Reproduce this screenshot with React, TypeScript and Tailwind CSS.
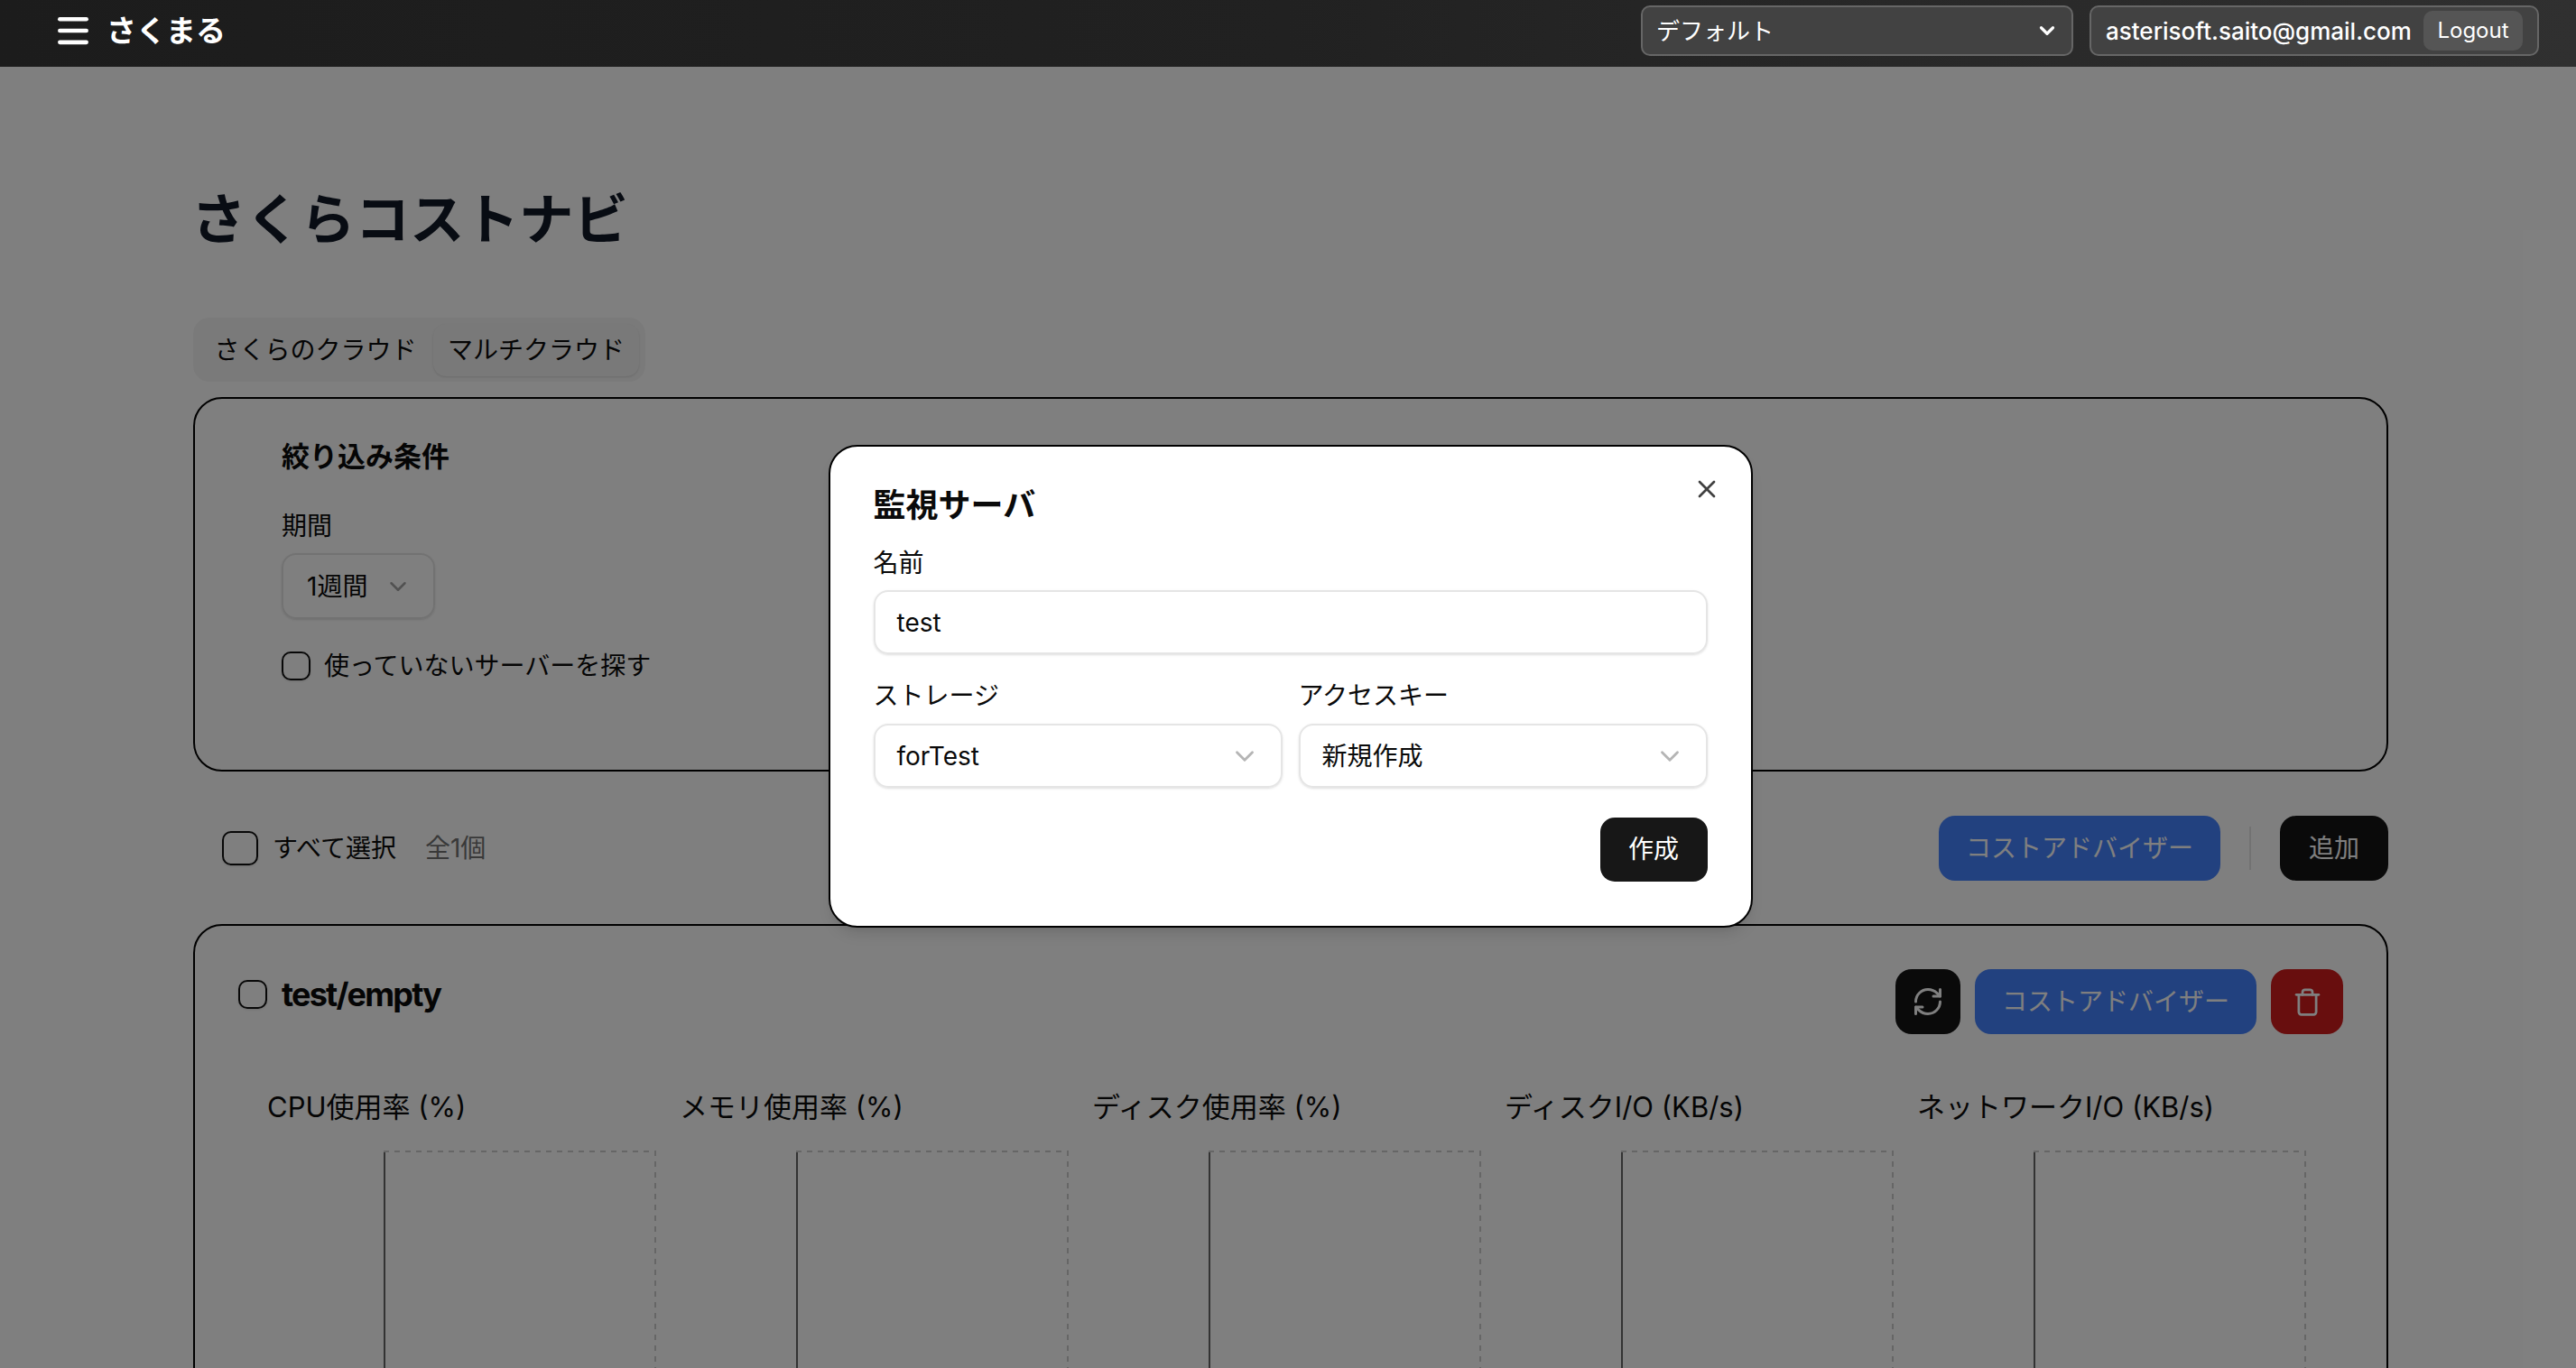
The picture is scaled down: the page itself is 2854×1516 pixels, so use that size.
import { ChevronDown, Menu, RefreshCw, Trash, X } from "lucide-react";

const FONT = "font-['Inter','Noto_Sans_CJK_JP',sans-serif]";

const charts = ["CPU使用率 (%)", "メモリ使用率 (%)", "ディスク使用率 (%)", "ディスクI/O (KB/s)", "ネットワークI/O (KB/s)"];

function EmptyChart({ title }: { title: string }) {
  return (
    <div className="w-[457px] shrink-0">
      <div className="h-[48px] text-[31px] leading-[48px] text-[#0a0a0a]">{title}</div>
      <svg width="304" height="300" className="mt-[24px] ml-[129px] block">
        <line x1="1" y1="0" x2="1" y2="300" stroke="#666" strokeWidth="2" />
        <line x1="0" y1="1" x2="302" y2="1" stroke="#ccc" strokeWidth="2" strokeDasharray="6 6" />
        <line x1="301" y1="0" x2="301" y2="300" stroke="#ccc" strokeWidth="2" strokeDasharray="6 6" />
      </svg>
    </div>
  );
}

function Checkbox({ className }: { className: string }) {
  return <span className={`block shrink-0 border-2 border-[#111] shadow-sm ${className}`} />;
}

export default function App() {
  return (
    <div className={`relative h-[1516px] overflow-hidden bg-white text-[28px] text-[#0a0a0a] ${FONT}`}>
      <header className="relative z-20 flex h-[74px] items-center justify-between bg-linear-to-r from-[#1c1c1c] via-[#212121] to-[#303030] pr-[41px] pb-[6px] pl-[62px] text-white">
        <div className="flex items-center gap-[19px]">
          <Menu size={44} strokeWidth={2.5} className="-mx-[3px]" />
          <span className="-ml-[1px] text-[33px] leading-[44px] font-bold">さくまる</span>
        </div>
        <div className="flex items-center gap-[18px]">
          <div className="flex h-[56px] w-[479px] items-center justify-between rounded-[10px] border-2 border-[#666] bg-[#424242] pr-[14px] pl-[15px] text-[26px]">
            デフォルト
            <ChevronDown size={26} strokeWidth={3} />
          </div>
          <div className="flex h-[56px] w-[498px] items-center justify-between rounded-[10px] border-2 border-[#666] bg-[#424242] pr-[16px] pl-[16px] text-[26px] font-medium">
            asterisoft.saito@gmail.com
            <span className="flex h-[44px] w-[110px] items-center justify-center rounded-[10px] bg-[#555] text-[24px] font-normal">Logout</span>
          </div>
        </div>
      </header>

      <main className="pr-[208px] pl-[214px]">
        <h1 className="mt-[133px] -ml-[2px] text-[60.5px] leading-[72px] font-bold text-[#111827]">さくらコストナビ</h1>

        <div className="mt-[73px] flex h-[71px] w-[501px] items-center gap-[2px] rounded-[18px] bg-[#f5f5f5] px-[7px]">
          <span className="flex h-[58px] w-[258px] items-center justify-center rounded-[14px]">さくらのクラウド</span>
          <span className="flex h-[58px] w-[229px] items-center justify-center rounded-[14px] bg-[#f2f2f2] shadow-sm">マルチクラウド</span>
        </div>

        <section className="mt-[17px] h-[415px] rounded-[32px] border-2 border-black pt-[40px] pl-[96px]">
          <h2 className="text-[31px] leading-[48px] font-bold">絞り込み条件</h2>
          <div className="mt-[33px] leading-[40px]">期間</div>
          <div className="mt-[10px] flex h-[73px] w-[170px] items-center justify-between rounded-[16px] border-2 border-[#e5e5e5] pr-[24px] pl-[26px] shadow-sm">
            1週間
            <ChevronDown size={30} strokeWidth={2} className="text-[#a3a3a3]" />
          </div>
          <label className="mt-[31px] flex items-center gap-[15px]">
            <Checkbox className="size-[32px] rounded-[10px]" />
            使っていないサーバーを探す
          </label>
        </section>

        <div className="mt-[49px] flex h-[72px] items-center justify-between pl-[32px]">
          <div className="flex items-center">
            <Checkbox className="h-[38px] w-[40px] rounded-[10px]" />
            <span className="ml-[16px]">すべて選択</span>
            <span className="ml-[32px] text-[#737373]">全1個</span>
          </div>
          <div className="flex items-center">
            <button className="h-[72px] w-[312px] rounded-[18px] bg-[#4482ff] text-white">コストアドバイザー</button>
            <span className="mx-[32px] h-[48px] w-[2px] bg-[#e5e5e5]" />
            <button className="h-[72px] w-[120px] rounded-[18px] bg-[#141414] text-white">追加</button>
          </div>
        </div>

        <section className="mt-[48px] h-[700px] rounded-[32px] border-2 border-black px-[48px] pt-[48px]">
          <div className="flex items-start justify-between">
            <div className="flex h-[56px] items-center gap-[16px]">
              <Checkbox className="size-[32px] rounded-[10px]" />
              <span className="text-[36px] font-bold tracking-[-0.05em] text-[#0a0a0a]">test/empty</span>
            </div>
            <div className="flex gap-[16px]">
              <button className="flex size-[72px] items-center justify-center rounded-[18px] bg-[#141414] text-white"><RefreshCw size={36} strokeWidth={2} /></button>
              <button className="h-[72px] w-[312px] rounded-[18px] bg-[#4482ff] text-white">コストアドバイザー</button>
              <button className="flex h-[72px] w-[80px] items-center justify-center rounded-[18px] bg-[#d01c1c] text-white"><Trash size={33} strokeWidth={2} /></button>
            </div>
          </div>
          <div className="mt-[57px] flex pl-[32px]">
            {charts.map((c) => (
              <EmptyChart key={c} title={c} />
            ))}
          </div>
        </section>
      </main>

      <div className="absolute inset-0 z-10 flex items-center justify-center bg-black/50 pt-[4px] pl-[5px]">
        <div className="relative h-[535px] w-[1024px] rounded-[32px] border-2 border-black bg-white px-[48px] pt-[41px] shadow-lg">
          <X size={32} strokeWidth={2} className="absolute top-[31px] right-[33px] text-[#404040]" />
          <h2 className="text-[36px] leading-[48px] font-bold">監視サーバ</h2>
          <div className="mt-[20px] leading-[40px]">名前</div>
          <div className="mt-[10px] flex h-[71px] items-center rounded-[16px] border-2 border-[#e5e5e5] px-[24px] pt-[2px] shadow-sm">test</div>
          <div className="mt-[26px] flex gap-[18px]">
            {[["ストレージ", "forTest"], ["アクセスキー", "新規作成"]].map(([label, value]) => (
              <div key={label} className="flex-1">
                <div className="leading-[40px]">{label}</div>
                <div className="mt-[11px] flex h-[71px] items-center justify-between rounded-[16px] border-2 border-[#e5e5e5] pt-[2px] pr-[23px] pl-[24px] shadow-sm">
                  {value}
                  <ChevronDown size={34} strokeWidth={2} className="text-[#b5b5b5]" />
                </div>
              </div>
            ))}
          </div>
          <div className="mt-[33px] flex justify-end">
            <button className="h-[71px] w-[119px] rounded-[16px] bg-[#171717] text-white">作成</button>
          </div>
        </div>
      </div>
    </div>
  );
}
